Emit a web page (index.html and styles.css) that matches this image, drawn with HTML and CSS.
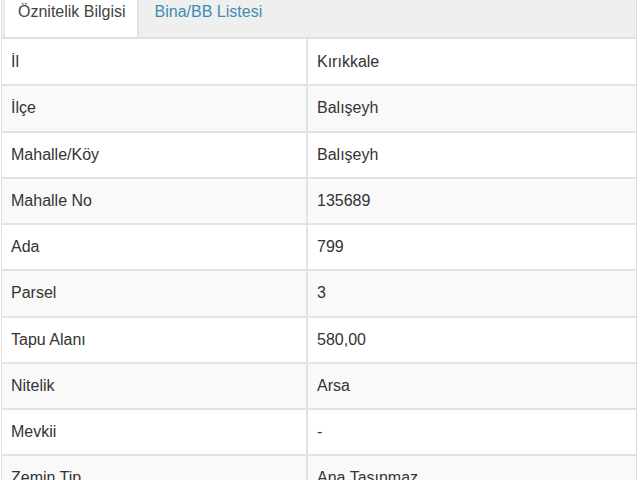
FILE: index.html
```html
<!DOCTYPE html>
<html lang="tr">
<head>
<meta charset="utf-8">
<link rel="stylesheet" href="styles.css">
</head>
<body>
<div class="panel">
  <div class="tabs">
    <div class="tab active">Öznitelik Bilgisi</div>
    <div class="tab">Bina/BB Listesi</div>
  </div>
  <table class="attr">
    <tr><td>İl</td><td>Kırıkkale</td></tr>
    <tr class="alt"><td>İlçe</td><td>Balışeyh</td></tr>
    <tr><td>Mahalle/Köy</td><td>Balışeyh</td></tr>
    <tr class="alt"><td>Mahalle No</td><td>135689</td></tr>
    <tr><td>Ada</td><td>799</td></tr>
    <tr class="alt"><td>Parsel</td><td>3</td></tr>
    <tr><td>Tapu Alanı</td><td>580,00</td></tr>
    <tr class="alt"><td>Nitelik</td><td>Arsa</td></tr>
    <tr><td>Mevkii</td><td>-</td></tr>
    <tr class="alt"><td>Zemin Tip</td><td>Ana Taşınmaz</td></tr>
  </table>
</div>
</body>
</html>
```
FILE: styles.css
```css
html, body {
  margin: 0;
  padding: 0;
  background: #fff;
}
body {
  font-family: "Liberation Sans", Arial, sans-serif;
  font-size: 16px;
  color: #333;
  overflow: hidden;
}
.panel {
  margin: 0 3px 0 1px;
  border-left: 1px solid #e2e2e2;
  border-right: 1px solid #dcdcdc;
}
.tabs {
  display: flex;
  height: 37px;
  background: #efefef;
  border-bottom: 2px solid #e0e0e0;
  padding-left: 2px;
}
.tab {
  flex-shrink: 0;
  white-space: nowrap;
  padding: 1px 15px 0 16px;
  line-height: 22px;
  color: #3d8cb0;
}
.tab.active {
  background: #fff;
  color: #444;
  padding-left: 13px;
  padding-right: 11px;
  border-left: 1px solid #e4e4e4;
  border-right: 2px solid #e2e2e2;
}
.attr {
  width: 100%;
  border-collapse: collapse;
}
.attr td {
  height: 44.25px;
  padding: 0 0 0 9px;
  border-bottom: 2px solid #e3e3e3;
  vertical-align: middle;
  white-space: nowrap;
}
.attr tr:first-child td {
  height: 45.25px;
}
.attr td:first-child {
  width: 295px;
  border-right: 2px solid #e3e3e3;
}
.attr tr.alt td {
  background: #f9f9f9;
}
```
